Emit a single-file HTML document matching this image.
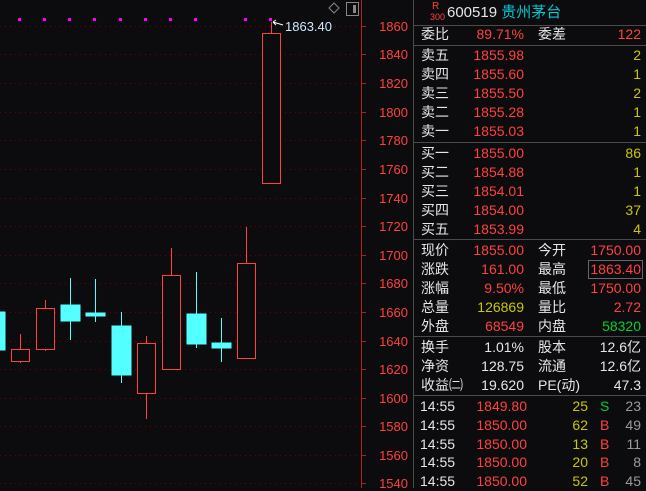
<!DOCTYPE html><html><head><style>
body{margin:0;background:#0c0c0f;width:646px;height:488px;overflow:hidden;font-family:"Liberation Sans","Noto Sans CJK SC",sans-serif;font-size:14px}
.r{position:absolute;height:19px;line-height:19px;white-space:nowrap}
.w{color:#e6e6e6}.rd{color:#ff4040}.y{color:#c8c800}.g{color:#00d030}.gr{color:#9a9a9a}.c{color:#00c8d0}
.sep{position:absolute;left:414px;width:232px;height:1px;background:#4a4a4a}
</style></head><body>
<svg width="414" height="488" style="position:absolute;left:0;top:0">
<g stroke="#7a0000" stroke-width="1" stroke-dasharray="1 4">
<line x1="0" x2="360" y1="26.5" y2="26.5"/><line x1="0" x2="360" y1="54.5" y2="54.5"/><line x1="0" x2="360" y1="83.5" y2="83.5"/><line x1="0" x2="360" y1="112.5" y2="112.5"/><line x1="0" x2="360" y1="140.5" y2="140.5"/><line x1="0" x2="360" y1="169.5" y2="169.5"/><line x1="0" x2="360" y1="198.5" y2="198.5"/><line x1="0" x2="360" y1="226.5" y2="226.5"/><line x1="0" x2="360" y1="255.5" y2="255.5"/><line x1="0" x2="360" y1="283.5" y2="283.5"/><line x1="0" x2="360" y1="312.5" y2="312.5"/><line x1="0" x2="360" y1="341.5" y2="341.5"/><line x1="0" x2="360" y1="369.5" y2="369.5"/><line x1="0" x2="360" y1="398.5" y2="398.5"/><line x1="0" x2="360" y1="426.5" y2="426.5"/><line x1="0" x2="360" y1="455.5" y2="455.5"/><line x1="0" x2="360" y1="483.5" y2="483.5"/>
</g>
<line x1="361.5" x2="361.5" y1="0" y2="488" stroke="#b02020"/>
<g stroke="#b02020">
<line x1="361" x2="366" y1="26.5" y2="26.5"/><line x1="361" x2="366" y1="54.5" y2="54.5"/><line x1="361" x2="366" y1="83.5" y2="83.5"/><line x1="361" x2="366" y1="112.5" y2="112.5"/><line x1="361" x2="366" y1="140.5" y2="140.5"/><line x1="361" x2="366" y1="169.5" y2="169.5"/><line x1="361" x2="366" y1="198.5" y2="198.5"/><line x1="361" x2="366" y1="226.5" y2="226.5"/><line x1="361" x2="366" y1="255.5" y2="255.5"/><line x1="361" x2="366" y1="283.5" y2="283.5"/><line x1="361" x2="366" y1="312.5" y2="312.5"/><line x1="361" x2="366" y1="341.5" y2="341.5"/><line x1="361" x2="366" y1="369.5" y2="369.5"/><line x1="361" x2="366" y1="398.5" y2="398.5"/><line x1="361" x2="366" y1="426.5" y2="426.5"/><line x1="361" x2="366" y1="455.5" y2="455.5"/><line x1="361" x2="366" y1="483.5" y2="483.5"/>
</g>
<line x1="413.5" x2="413.5" y1="0" y2="488" stroke="#4a4a4a"/>
<g fill="#ff4040" font-size="13" text-anchor="end" font-family="Liberation Sans">
<text x="408" y="31">1860</text><text x="408" y="59">1840</text><text x="408" y="88">1820</text><text x="408" y="117">1800</text><text x="408" y="145">1780</text><text x="408" y="174">1760</text><text x="408" y="203">1740</text><text x="408" y="231">1720</text><text x="408" y="260">1700</text><text x="408" y="288">1680</text><text x="408" y="317">1660</text><text x="408" y="346">1640</text><text x="408" y="374">1620</text><text x="408" y="403">1600</text><text x="408" y="431">1580</text><text x="408" y="460">1560</text><text x="408" y="488">1540</text>
</g>
<g fill="#ff00ff">
<rect x="18" y="18" width="3" height="3"/><rect x="43" y="18" width="3" height="3"/><rect x="68" y="18" width="3" height="3"/><rect x="93" y="18" width="3" height="3"/><rect x="119" y="18" width="3" height="3"/><rect x="144" y="18" width="3" height="3"/><rect x="169" y="18" width="3" height="3"/><rect x="194" y="18" width="3" height="3"/><rect x="244" y="18" width="3" height="3"/><rect x="269" y="18" width="3" height="3"/>
</g>
<path d="M334 3 L339 8 L334 13 L329 8Z" fill="none" stroke="#888"/>
<rect x="346.5" y="2.5" width="12" height="13" fill="none" stroke="#888"/><rect x="353" y="5" width="3" height="8" fill="#888"/>
<path d="M273 22 L283 25 M273 22 L276 20 M273 22 L276 25" stroke="#fff" fill="none"/>
<text x="285" y="31" fill="#d0e8ff" font-size="13">1863.40</text>
<g stroke="#ff4040" fill="none" stroke-width="1">
<line x1="20.5" x2="20.5" y1="334" y2="363"/><rect x="11.5" y="349.5" width="18" height="12" fill="#0c0c0f"/>
<line x1="45.5" x2="45.5" y1="300" y2="351"/><rect x="36.5" y="308.5" width="18" height="41" fill="#0c0c0f"/>
<line x1="146.5" x2="146.5" y1="336" y2="419"/><rect x="137.5" y="343.5" width="18" height="50" fill="#0c0c0f"/>
<line x1="171.5" x2="171.5" y1="248" y2="370"/><rect x="162.5" y="275.5" width="18" height="94" fill="#0c0c0f"/>
<line x1="246.5" x2="246.5" y1="227" y2="358"/><rect x="237.5" y="263.5" width="18" height="95" fill="#0c0c0f"/>
<line x1="271.5" x2="271.5" y1="22" y2="33"/><rect x="262.5" y="33.5" width="18" height="150" fill="#0c0c0f"/>
</g>
<g stroke="#54ffff" fill="#54ffff">
<rect x="0" y="312" width="5" height="38"/>
<line x1="70.5" x2="70.5" y1="278" y2="340"/><rect x="61" y="305" width="19" height="16"/>
<line x1="95.5" x2="95.5" y1="279" y2="322"/><rect x="86" y="313" width="19" height="3"/>
<line x1="121.5" x2="121.5" y1="312" y2="383"/><rect x="112" y="326" width="19" height="49"/>
<line x1="196.5" x2="196.5" y1="272" y2="348"/><rect x="187" y="314" width="19" height="30"/>
<line x1="221.5" x2="221.5" y1="318" y2="362"/><rect x="212" y="343" width="19" height="5"/>
</g>
</svg>
<div class="r rd" style="left:432px;top:2px;font-size:10px;line-height:10px">R</div>
<div class="r rd" style="left:430px;top:12px;font-size:9px;line-height:10px">300</div>
<div class="r w" style="left:447px;top:3px;font-size:15px">600519 <span class="c">贵州茅台</span></div>
<div class="sep" style="top:25px"></div>
<div class="sep" style="top:45px"></div>
<div class="sep" style="top:142px"></div>
<div class="sep" style="top:239px"></div>
<div class="sep" style="top:336px"></div>
<div class="sep" style="top:395px"></div>
<div id="rows"></div>
<script>
var rows=[
[25,'委比','89.71%','rd','委差','122','rd'],
[46,'卖五','1855.98','rd','','2','y'],[65,'卖四','1855.60','rd','','1','y'],[84,'卖三','1855.50','rd','','2','y'],[103,'卖二','1855.28','rd','','1','y'],[122,'卖一','1855.03','rd','','1','y'],
[144,'买一','1855.00','rd','','86','y'],[163,'买二','1854.88','rd','','1','y'],[182,'买三','1854.01','rd','','1','y'],[201,'买四','1854.00','rd','','37','y'],[220,'买五','1853.99','rd','','4','y'],
[241,'现价','1855.00','rd','今开','1750.00','rd'],[260,'涨跌','161.00','rd','最高','1863.40','rd'],[279,'涨幅','9.50%','rd','最低','1750.00','rd'],[298,'总量','126869','y','量比','2.72','rd'],[317,'外盘','68549','rd','内盘','58320','g'],
[338,'换手','1.01%','w','股本','12.6亿','w'],[357,'净资','128.75','w','流通','12.6亿','w'],[376,'收益㈡','19.620','w','PE(动)','47.3','w']];
var h='';rows.forEach(function(r){
h+='<div class="r w" style="left:421px;top:'+r[0]+'px">'+r[1]+'</div>';
h+='<div class="r '+r[3]+'" style="right:122px;top:'+r[0]+'px">'+r[2]+'</div>';
if(r[4])h+='<div class="r w" style="left:538px;top:'+r[0]+'px">'+r[4]+'</div>';
h+='<div class="r '+r[6]+'" style="right:5px;top:'+r[0]+'px'+(r[4]=='最高'?';border:1px solid #666;height:17px;line-height:17px;padding:0 1px;right:3px':'')+'">'+r[5]+'</div>';});
var t=[['1849.80','25','S','23'],['1850.00','62','B','49'],['1850.00','13','B','11'],['1850.00','20','B','8'],['1850.00','52','B','45']];
t.forEach(function(r,i){var y=397+i*18.8;
h+='<div class="r w" style="left:420px;top:'+y+'px">14:55</div>';
h+='<div class="r rd" style="right:119px;top:'+y+'px">'+r[0]+'</div>';
h+='<div class="r y" style="right:58px;top:'+y+'px">'+r[1]+'</div>';
h+='<div class="r '+(r[2]=='S'?'g':'rd')+'" style="left:600px;top:'+y+'px">'+r[2]+'</div>';
h+='<div class="r gr" style="right:5px;top:'+y+'px">'+r[3]+'</div>';});
document.getElementById('rows').innerHTML=h;
</script>
</body></html>
